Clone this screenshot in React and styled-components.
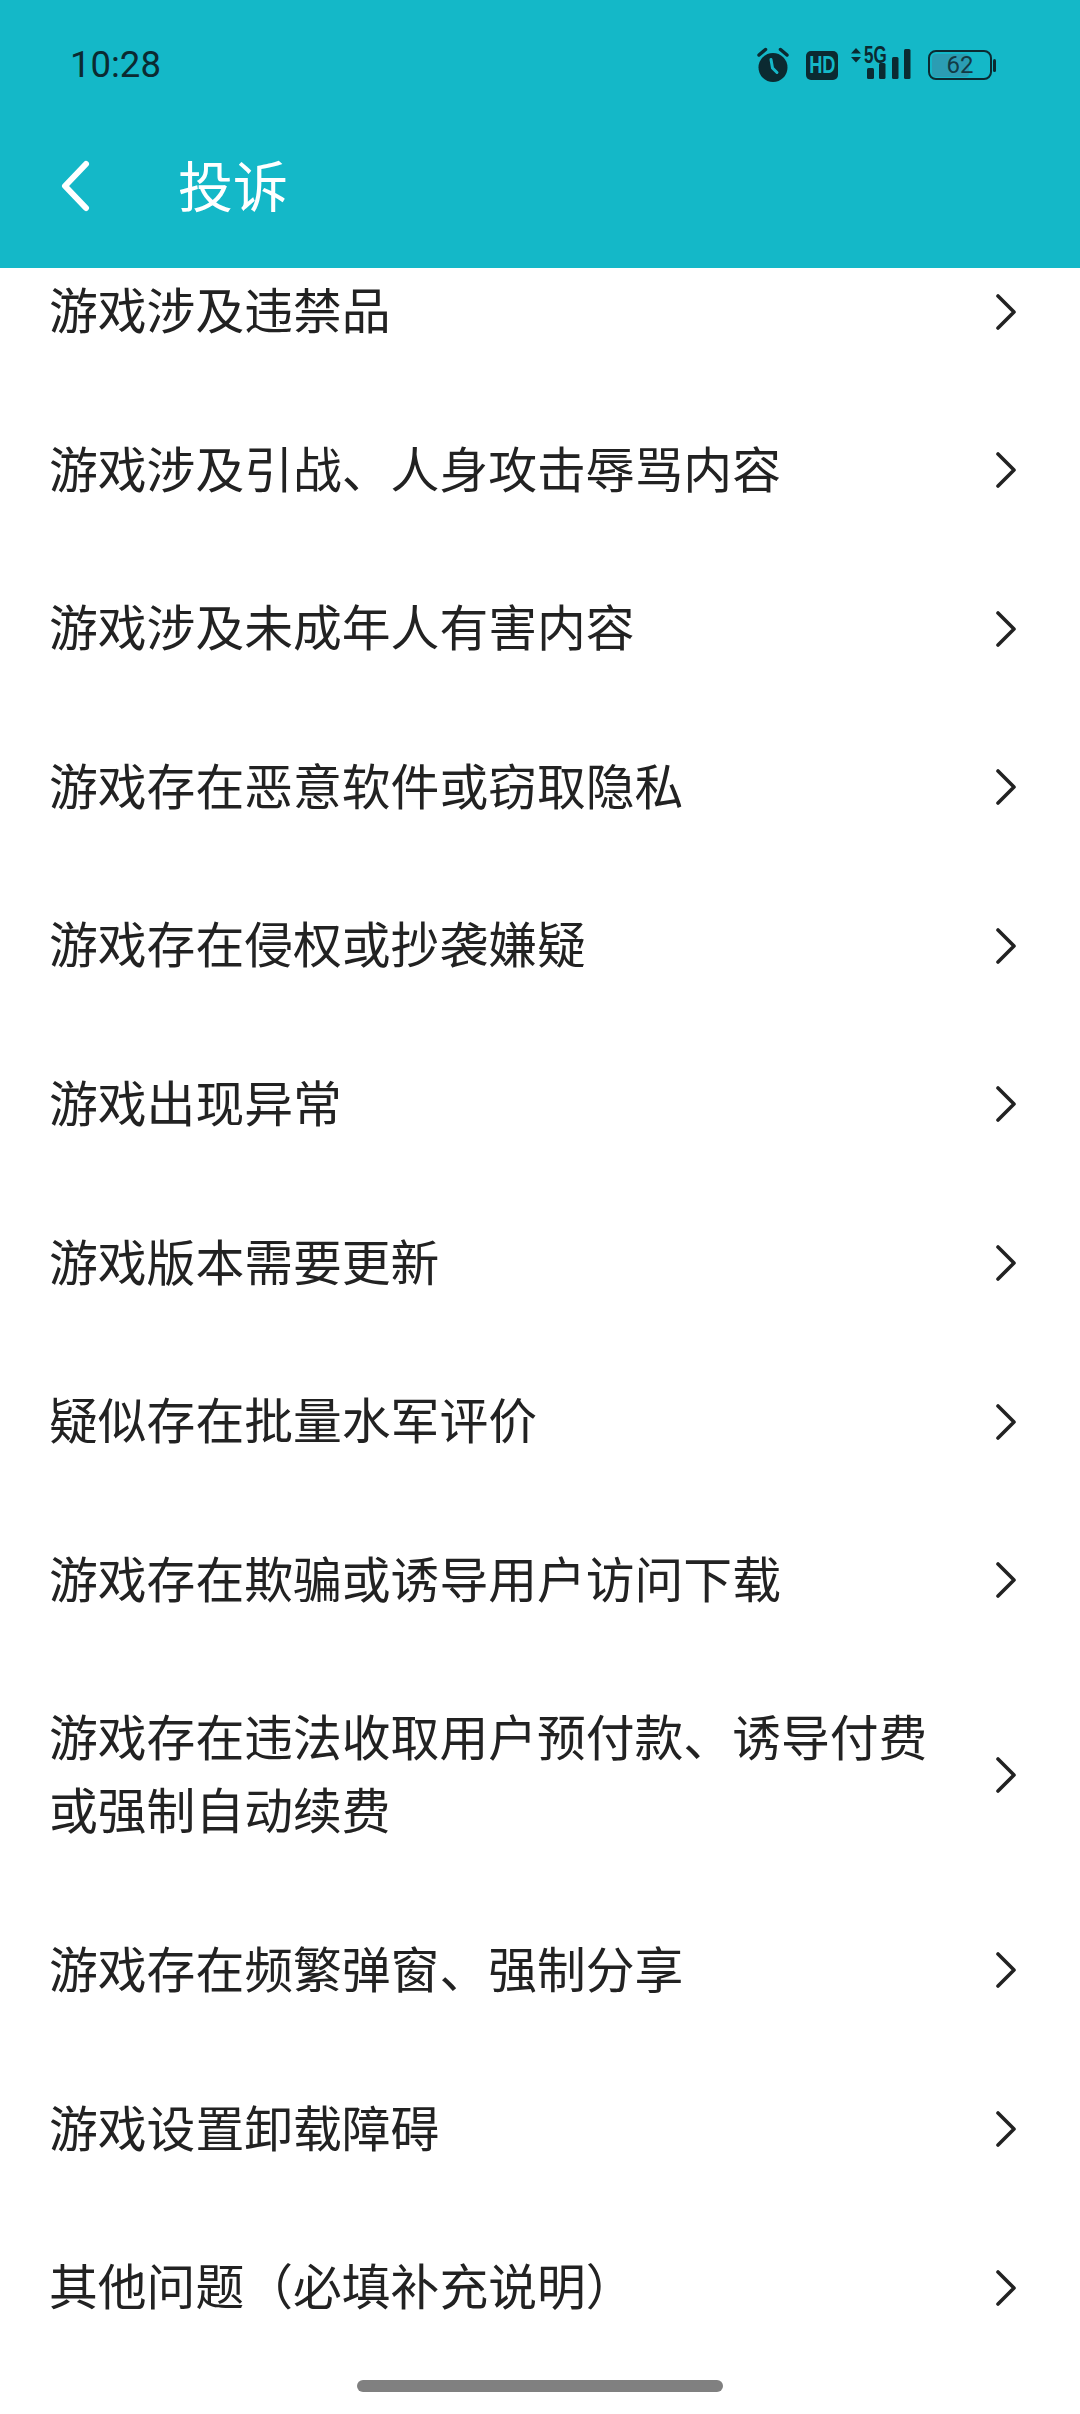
import React from "react";
import styled, { createGlobalStyle } from "styled-components";

const GlobalStyle = createGlobalStyle`
  html, body {
    margin: 0;
    padding: 0;
    background: #fff;
  }
  body {
    font-family: "Noto Sans CJK SC", "Noto Sans", sans-serif;
  }
`;

const Page = styled.div`
  width: 1080px;
  height: 2414px;
  background: #fff;
  display: flex;
  flex-direction: column;
  overflow: hidden;
  position: relative;
`;

const Header = styled.header`
  height: 268px;
  flex-shrink: 0;
  background: #14b8c8;
  display: flex;
  flex-direction: column;
  position: relative;
  z-index: 1;
`;

const StatusBar = styled.div`
  height: 80px;
  margin-top: 24px;
  padding: 0 88px 0 70px;
  display: flex;
  align-items: center;
  justify-content: space-between;
  color: #0b2a31;
`;

const Time = styled.span`
  font-family: Roboto, "Liberation Sans", sans-serif;
  font-size: 36.5px;
`;

const StatusIcons = styled.div`
  display: flex;
  align-items: center;
`;

const HdBadge = styled.span`
  width: 32px;
  height: 29px;
  margin: 2px 13px 0 16px;
  border-radius: 5px;
  background: #0b2a31;
  color: #14b8c8;
  display: flex;
  align-items: center;
  justify-content: center;
`;

const HdText = styled.span`
  font-family: "Liberation Sans", sans-serif;
  font-size: 24px;
  font-weight: 700;
  line-height: 1;
  transform: scaleX(0.76);
`;

const Signal = styled.div`
  width: 60px;
  height: 36px;
  position: relative;
`;

const SignalLabel = styled.span`
  position: absolute;
  left: 13px;
  top: -1px;
  font-family: "Liberation Sans", sans-serif;
  font-size: 23px;
  font-weight: 700;
  line-height: 20px;
  transform: scaleX(0.74);
  transform-origin: left top;
`;

const Battery = styled.div`
  width: 64px;
  height: 30px;
  margin: 2px 0 0 17px;
  box-sizing: border-box;
  border: 2.5px solid #0b2a31;
  border-radius: 8px;
  position: relative;
  display: flex;
  align-items: center;
  justify-content: center;

  &::after {
    content: "";
    position: absolute;
    right: -5.5px;
    top: 6.5px;
    width: 3px;
    height: 13px;
    border-radius: 2px;
    background: #0b2a31;
  }
`;

const BatteryFill = styled.div`
  position: absolute;
  left: 1.5px;
  top: 1.5px;
  bottom: 1.5px;
  border-radius: 4px;
  background: #2b9db3;
`;

const BatteryLevel = styled.span`
  position: relative;
  font-family: Roboto, "Liberation Sans", sans-serif;
  font-size: 24px;
  line-height: 1;
  color: #123a44;
`;

const NavBar = styled.div`
  flex: 1;
  display: flex;
  align-items: center;
  padding-left: 60px;
`;

const BackButton = styled.button`
  width: 30px;
  height: 52px;
  padding: 0;
  border: 0;
  background: none;
  display: flex;
`;

const Title = styled.h1`
  margin: 0 0 6px 88px;
  font-size: 55px;
  font-weight: 400;
  line-height: 1;
  color: #fff;
`;

const Scroller = styled.div`
  flex: 1;
  overflow: hidden;
`;

const List = styled.ul`
  list-style: none;
  margin: -36px 0 0;
  padding: 0;
`;

const Row = styled.li`
  padding: 39px 64px 38.6px 49px;
  display: flex;
  align-items: center;
  justify-content: space-between;
`;

const RowLabel = styled.span`
  width: 890px;
  padding-bottom: 8px;
  font-size: 48.8px;
  line-height: 73px;
  color: #222;
`;

const HomeIndicator = styled.div`
  position: absolute;
  left: 357px;
  top: 2380px;
  width: 366px;
  height: 12px;
  border-radius: 6px;
  background: #808080;
`;

const items = [
  "游戏涉及违禁品",
  "游戏涉及引战、人身攻击辱骂内容",
  "游戏涉及未成年人有害内容",
  "游戏存在恶意软件或窃取隐私",
  "游戏存在侵权或抄袭嫌疑",
  "游戏出现异常",
  "游戏版本需要更新",
  "疑似存在批量水军评价",
  "游戏存在欺骗或诱导用户访问下载",
  "游戏存在违法收取用户预付款、诱导付费或强制自动续费",
  "游戏存在频繁弹窗、强制分享",
  "游戏设置卸载障碍",
  "其他问题（必填补充说明）",
];

const AlarmIcon = () => (
  <svg width="34" height="38" viewBox="0 0 34 38">
    <circle cx="17" cy="22.5" r="14.5" fill="#0b2a31" />
    <path d="M3 10 L9.5 4.5 M31 10 L24.5 4.5" stroke="#0b2a31" strokeWidth="3.5" strokeLinecap="round" />
    <path d="M15 14.5 L16.5 23 L21 27.5" fill="none" stroke="#14b8c8" strokeWidth="3" strokeLinecap="round" />
  </svg>
);

const SignalIcon = () => (
  <svg width="60" height="36" viewBox="0 0 60 36">
    <path d="M0 7.5 L5 2 L10 7.5 Z M0 11 L10 11 L5 16.5 Z" fill="#0b2a31" />
    <rect x="16" y="22" width="7" height="11" rx="1.5" fill="#0b2a31" />
    <rect x="28" y="17" width="6.5" height="16" rx="1.5" fill="#0b2a31" />
    <rect x="41" y="11" width="6.5" height="22" rx="1.5" fill="#0b2a31" />
    <rect x="53" y="3" width="6.5" height="30" rx="1.5" fill="#0b2a31" />
  </svg>
);

const BackIcon = () => (
  <svg width="30" height="52" viewBox="0 0 30 52">
    <path d="M26 4 L5 26 L26 48" fill="none" stroke="#fff" strokeWidth="6" strokeLinecap="round" strokeLinejoin="round" />
  </svg>
);

const ChevronIcon = () => (
  <svg width="20" height="36" viewBox="0 0 20 36">
    <path d="M2 2 L18 18 L2 34" fill="none" stroke="#222" strokeWidth="3.6" strokeLinecap="round" strokeLinejoin="round" />
  </svg>
);

const App = () => (
  <Page>
    <GlobalStyle />
    <Header>
      <StatusBar>
        <Time>10:28</Time>
        <StatusIcons>
          <AlarmIcon />
          <HdBadge>
            <HdText>HD</HdText>
          </HdBadge>
          <Signal>
            <SignalIcon />
            <SignalLabel>5G</SignalLabel>
          </Signal>
          <Battery>
            <BatteryFill style={{ width: `${62 * 0.6}px` }} />
            <BatteryLevel>62</BatteryLevel>
          </Battery>
        </StatusIcons>
      </StatusBar>
      <NavBar>
        <BackButton>
          <BackIcon />
        </BackButton>
        <Title>投诉</Title>
      </NavBar>
    </Header>
    <Scroller>
      <List>
        {items.map((item) => (
          <Row key={item}>
            <RowLabel>{item}</RowLabel>
            <ChevronIcon />
          </Row>
        ))}
      </List>
    </Scroller>
    <HomeIndicator />
  </Page>
);

export default App;
